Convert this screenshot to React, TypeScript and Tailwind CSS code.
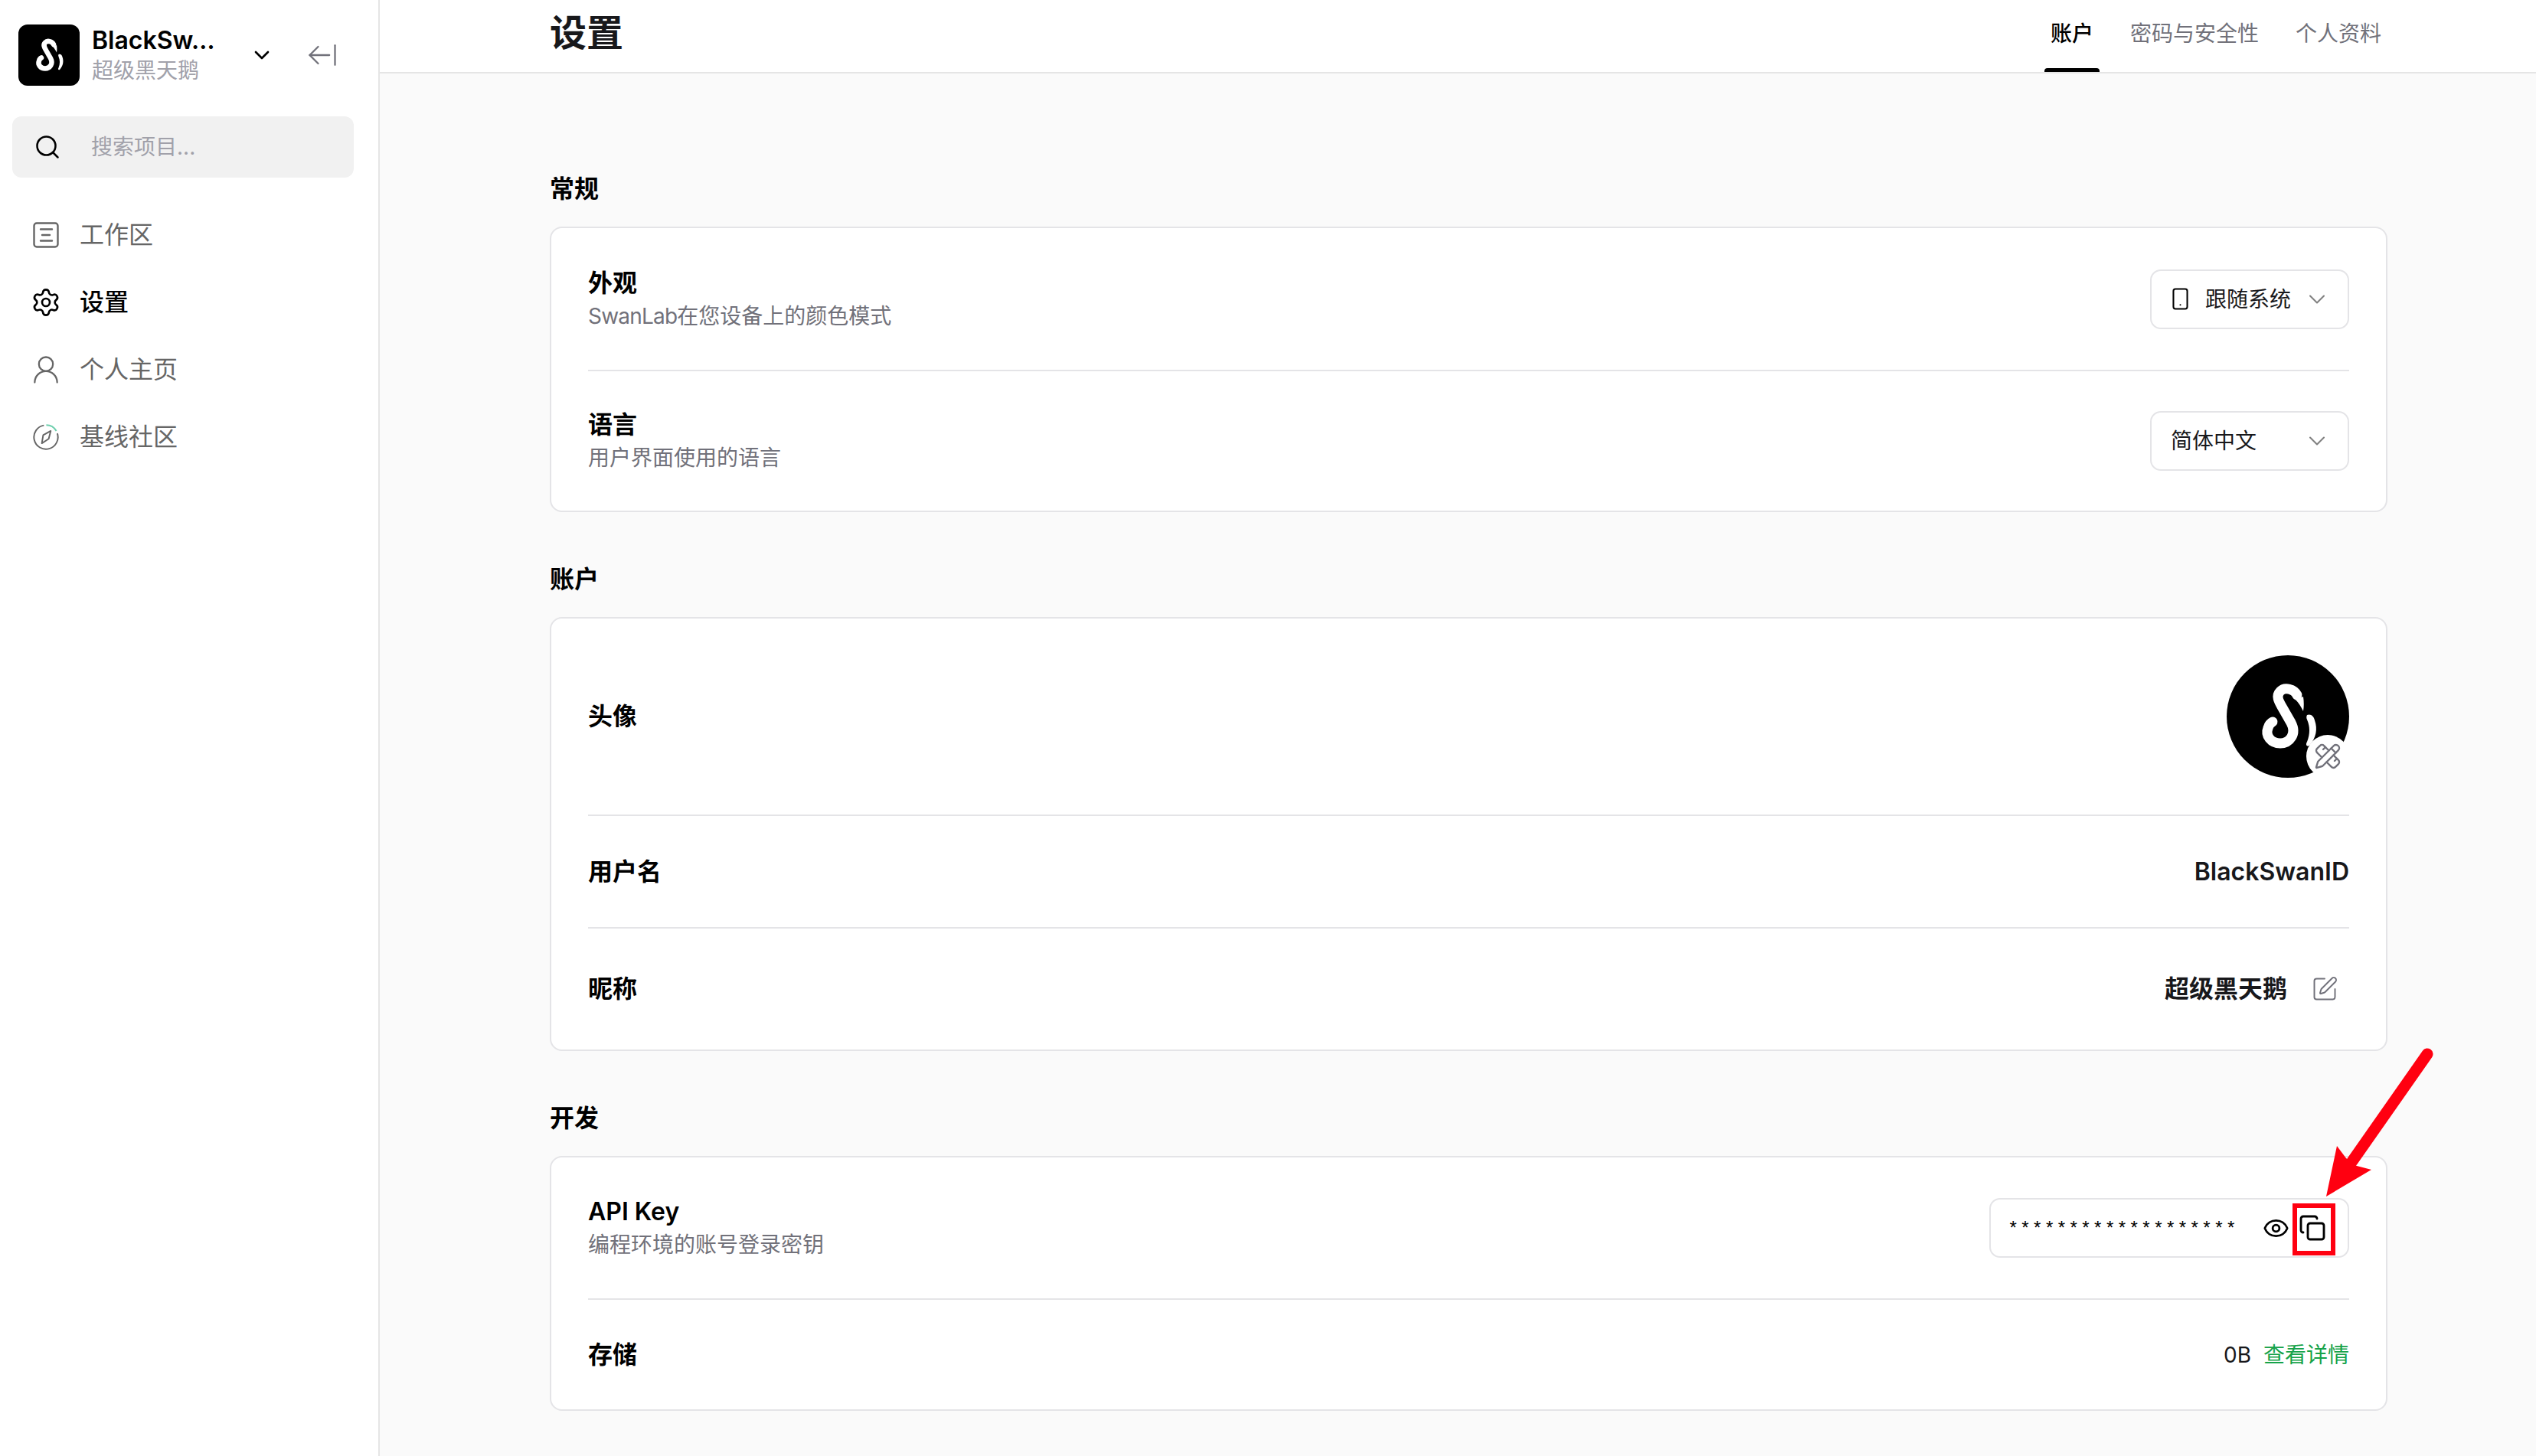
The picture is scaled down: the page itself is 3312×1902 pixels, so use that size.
import { ChevronDown, ArrowLeftFromLine, Search, Settings, UserRound, Smartphone, PencilRuler, SquarePen, Eye, Copy } from "lucide-react"

function SwanMark({ className }: { className?: string }) {
  return (
    <svg viewBox="0 0 160 160" className={className} fill="none">
      <path
        d="M92 52C88 44 76 41 70 47C64 53 68 60 72 67L84 88C92 103 82 115 70 115C58 115 50 105 54 95C55 91 58 88 60 87"
        stroke="white"
        strokeWidth="13"
        strokeLinecap="round"
      />
      <path d="M90 58L100 54C101 61 101 67 100 73C97 67 94 62 90 58Z" fill="white" />
      <path d="M105 78C110 76 114 80 115 85C119 96 117 108 108 118C104 120 103 116 105 113C109 103 109 93 105 84C104 82 104 80 105 78Z" fill="white" />
    </svg>
  )
}

function WorkspaceIcon() {
  return (
    <svg width="34" height="34" viewBox="0 0 34 34" fill="none" stroke="#666666" strokeWidth="2.4" strokeLinecap="round">
      <rect x="1.5" y="1.5" width="31" height="31" rx="3.5" />
      <path d="M10 9.5h15M12 17h10M10 24.5h15" />
    </svg>
  )
}

function CompassIcon() {
  return (
    <svg width="38" height="38" viewBox="0 0 38 38" fill="none" strokeWidth="2.2">
      <path d="M16 1.8A17.5 17.5 0 1 0 35.6 13.5" stroke="#666666" />
      <path d="M19.5 1.5A17.5 17.5 0 0 1 34.2 10" stroke="#6fcfae" />
      <path d="M26 10L23 21.5L13 28L15 16Z" stroke="#666666" strokeLinejoin="round" />
    </svg>
  )
}

function NavItem({ icon, label, active }: { icon: React.ReactNode; label: string; active?: boolean }) {
  return (
    <div className={`flex h-[88px] items-center gap-[27px] pl-[27px] text-[32px] ${active ? "font-medium text-black" : "text-[#666666]"}`}>
      <span className="flex w-[34px] shrink-0 justify-center">{icon}</span>
      <span>{label}</span>
    </div>
  )
}

function Sidebar() {
  return (
    <aside className="flex h-full w-[496px] shrink-0 flex-col border-r-2 border-[#e5e5e5] bg-white px-[16px]">
      <div className="mt-[32px] flex h-[80px] items-center pl-[8px]">
        <div className="h-[80px] w-[80px] shrink-0 rounded-[12px] bg-black">
          <SwanMark className="h-full w-full" />
        </div>
        <div className="ml-[16px] w-[176px] shrink-0">
          <div className="text-[32px] leading-[40px] font-semibold whitespace-nowrap text-black">BlackSw…</div>
          <div className="text-[28px] leading-[38px] text-[#a1a1aa]">超级黑天鹅</div>
        </div>
        <ChevronDown size={32} strokeWidth={2} className="ml-[30px] shrink-0 text-black" />
        <ArrowLeftFromLine size={44} strokeWidth={1.25} className="ml-[41px] shrink-0 text-[#71717a]" />
      </div>

      <div className="mt-[40px] flex h-[80px] w-[446px] items-center rounded-[12px] bg-[#f1f1f1] pl-[28px]">
        <Search size={36} strokeWidth={1.7} className="shrink-0 text-black" />
        <span className="ml-[39px] text-[28px] text-[#a1a1aa]">搜索项目...</span>
      </div>

      <nav className="mt-[31px]">
        <NavItem icon={<WorkspaceIcon />} label="工作区" />
        <NavItem icon={<Settings size={40} strokeWidth={1.6} className="shrink-0" />} label="设置" active />
        <NavItem icon={<UserRound size={44} strokeWidth={1.25} className="shrink-0" />} label="个人主页" />
        <NavItem icon={<CompassIcon />} label="基线社区" />
      </nav>
    </aside>
  )
}

function Tab({ label, active }: { label: string; active?: boolean }) {
  return (
    <div className="flex h-full flex-col">
      <div className={`flex flex-1 items-center px-[8px] pb-[2px] text-[28px] ${active ? "font-medium text-black" : "text-[#71717a]"}`}>{label}</div>
      <div className={`h-[5px] rounded-t-[4px] ${active ? "bg-black" : "bg-transparent"}`}></div>
    </div>
  )
}

function SectionLabel({ children }: { children: React.ReactNode }) {
  return <h2 className="mb-[27px] h-[44px] text-[32px] leading-[44px] font-semibold text-black">{children}</h2>
}

function Card({ children }: { children: React.ReactNode }) {
  return <div className="rounded-[16px] border-2 border-[#e4e4e7] bg-white px-[48px]">{children}</div>
}

function RowTitle({ title, sub }: { title: React.ReactNode; sub?: React.ReactNode }) {
  return (
    <div>
      <div className="text-[32px] leading-[44px] font-semibold text-black">{title}</div>
      {sub && <div className="text-[28px] leading-[42px] text-[#71717a]">{sub}</div>}
    </div>
  )
}

function SelectBox({ icon, label }: { icon?: React.ReactNode; label: string }) {
  return (
    <div className="flex h-[78px] w-[260px] items-center rounded-[14px] border-2 border-[#e4e4e7] bg-white pr-[22px] pl-[25px] text-[28px] text-[#18181b]">
      {icon}
      <span>{label}</span>
      <ChevronDown size={36} strokeWidth={1.4} className="ml-auto shrink-0 text-[#808080]" />
    </div>
  )
}

function Annotation() {
  return (
    <svg viewBox="0 0 3312 1902" className="pointer-events-none absolute inset-0 h-[1902px] w-[3312px]" fill="none">
      <rect x="2997" y="1575" width="50" height="62" stroke="#ff0010" strokeWidth="6" />
      <path d="M3072 1517L3170 1377" stroke="#ff0010" strokeWidth="15" strokeLinecap="round" />
      <path d="M3038 1563L3052 1497L3064 1513L3078 1523L3097 1528Z" fill="#ff0010" />
    </svg>
  )
}

export default function App() {
  return (
    <div className="relative flex h-[1902px] w-[3312px] overflow-hidden bg-[#fafafa] font-['Inter','Noto_Sans_CJK_SC',sans-serif]">
      <Sidebar />

      <main className="flex min-w-0 flex-1 flex-col">
        <header className="flex h-[96px] shrink-0 items-center justify-between border-b-2 border-[#e5e5e5] bg-white pr-[194px] pl-[222px]">
          <h1 className="pb-[8px] text-[48px] font-semibold text-[#18181b]">设置</h1>
          <div className="flex h-full gap-[32px]">
            <Tab label="账户" active />
            <Tab label="密码与安全性" />
            <Tab label="个人资料" />
          </div>
        </header>

        <div className="flex flex-col gap-[66px] pt-[129px] pr-[194px] pl-[222px]">
          <section>
            <SectionLabel>常规</SectionLabel>
            <Card>
              <div className="flex h-[185px] items-center justify-between">
                <RowTitle title="外观" sub={<><span className="tracking-[-0.8px]">SwanLab</span>在您设备上的颜色模式</>} />
                <SelectBox icon={<Smartphone size={31} strokeWidth={1.6} className="mr-[17px] -ml-[3px] shrink-0 text-black" />} label="跟随系统" />
              </div>
              <div className="h-[2px] bg-[#e4e4e7]"></div>
              <div className="flex h-[182px] items-center justify-between">
                <RowTitle title="语言" sub="用户界面使用的语言" />
                <SelectBox label="简体中文" />
              </div>
            </Card>
          </section>

          <section>
            <SectionLabel>账户</SectionLabel>
            <Card>
              <div className="flex h-[256px] items-center justify-between">
                <RowTitle title="头像" />
                <div className="relative h-[160px] w-[160px] rounded-full bg-black">
                  <SwanMark className="h-full w-full" />
                  <div className="absolute top-[104px] left-[104px] flex h-[56px] w-[56px] items-center justify-center rounded-full bg-white">
                    <PencilRuler size={36} strokeWidth={1.6} className="text-[#71717a]" />
                  </div>
                </div>
              </div>
              <div className="h-[2px] bg-[#e4e4e7]"></div>
              <div className="flex h-[145px] items-center justify-between">
                <RowTitle title="用户名" />
                <span className="text-[32px] font-semibold text-[#18181b]">BlackSwanID</span>
              </div>
              <div className="h-[2px] bg-[#e4e4e7]"></div>
              <div className="flex h-[158px] items-center justify-between">
                <RowTitle title="昵称" />
                <div className="flex items-center gap-[31px] pr-[14px]">
                  <span className="text-[32px] font-semibold text-[#18181b]">超级黑天鹅</span>
                  <SquarePen size={36} strokeWidth={1.3} className="text-[#71717a]" />
                </div>
              </div>
            </Card>
          </section>

          <section>
            <SectionLabel>开发</SectionLabel>
            <Card>
              <div className="flex h-[184px] items-center justify-between">
                <RowTitle title="API Key" sub="编程环境的账号登录密钥" />
                <div className="flex h-[78px] w-[470px] items-center rounded-[14px] border-2 border-[#e4e4e7] bg-white pr-[28px] pl-[22px]">
                  <span className="pt-[6px] font-['Liberation_Mono',monospace] text-[24px] leading-[1] tracking-[1.4px] text-black">*******************</span>
                  <div className="ml-auto flex items-center gap-[12px] text-black">
                    <Eye size={35} strokeWidth={1.9} />
                    <Copy size={36} strokeWidth={1.9} />
                  </div>
                </div>
              </div>
              <div className="h-[2px] bg-[#e4e4e7]"></div>
              <div className="flex h-[143px] items-center justify-between">
                <RowTitle title="存储" />
                <div className="flex items-center gap-[16px] text-[28px]">
                  <span className="text-[#18181b]">0B</span>
                  <span className="text-[#16a34a]">查看详情</span>
                </div>
              </div>
            </Card>
          </section>
        </div>
      </main>

      <Annotation />
    </div>
  )
}
